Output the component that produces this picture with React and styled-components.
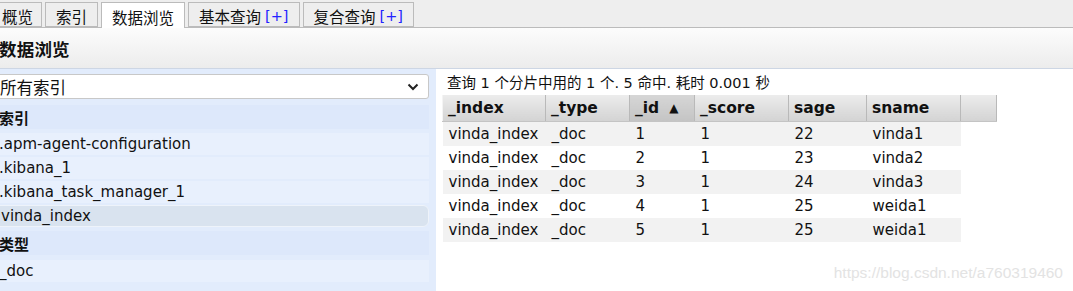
import React from 'react';
import styled, { createGlobalStyle } from 'styled-components';

const GlobalStyle = createGlobalStyle`
    html, body {
        margin: 0;
        padding: 0;
        background: #ffffff;
        overflow: hidden;
    }
    body {
        font-family: "DejaVu Sans", "Noto Sans CJK SC", sans-serif;
        color: #111;
    }
`

const tabs = [
    { label: '概览' },
    { label: '索引' },
    { label: '数据浏览', active: true },
    { label: '基本查询', plus: true },
    { label: '复合查询', plus: true },
];

const indices = ['.apm-agent-configuration', '.kibana_1', '.kibana_task_manager_1', 'vinda_index'];

const columns = [
    { key: '_index', width: 103 },
    { key: '_type', width: 84 },
    { key: '_id', width: 65, sorted: true },
    { key: '_score', width: 94 },
    { key: 'sage', width: 78 },
    { key: 'sname', width: 94 },
];

const rows = [
    ['vinda_index', '_doc', '1', '1', '22', 'vinda1'],
    ['vinda_index', '_doc', '2', '1', '23', 'vinda2'],
    ['vinda_index', '_doc', '3', '1', '24', 'vinda3'],
    ['vinda_index', '_doc', '4', '1', '25', 'weida1'],
    ['vinda_index', '_doc', '5', '1', '25', 'weida1'],
];

export default function App() {
    return (
        <>
            <GlobalStyle />
            <Page>
                <TabBar>
                    {tabs.map(t => (
                        <Tab key={t.label} active={t.active}>
                            {t.label}
                            {t.plus && <Plus>[+]</Plus>}
                        </Tab>
                    ))}
                </TabBar>
                <TitleBar>
                    <Title>数据浏览</Title>
                </TitleBar>
                <Body>
                    <Sidebar>
                        <SelectBox>
                            <SelectText>所有索引</SelectText>
                            <svg width="12" height="8" viewBox="0 0 12 8">
                                <polyline points="1.5,1.5 6,6 10.5,1.5" fill="none" stroke="#222" strokeWidth="2" />
                            </svg>
                        </SelectBox>
                        <SectionLabel>索引</SectionLabel>
                        <ItemList>
                            {indices.map(name => (
                                <Item key={name} selected={name === 'vinda_index'}>{name}</Item>
                            ))}
                        </ItemList>
                        <SectionLabel top={4}>类型</SectionLabel>
                        <ItemList top={5}>
                            <Item>_doc</Item>
                        </ItemList>
                    </Sidebar>
                    <Results>
                        <Info>查询 1 个分片中用的 1 个. 5 命中. 耗时 0.001 秒</Info>
                        <Table>
                            <thead>
                                <tr>
                                    {columns.map(c => (
                                        <HeadCell key={c.key} sorted={c.sorted} style={{ width: c.width }}>
                                            {c.key}{c.sorted && <Arrow>▲</Arrow>}
                                        </HeadCell>
                                    ))}
                                    <HeadCell style={{ width: 36 }} />
                                </tr>
                            </thead>
                            <tbody>
                                {rows.map((r, i) => (
                                    <Row key={i} odd={i % 2 === 0}>
                                        {r.map((v, j) => <Cell key={j}>{v}</Cell>)}
                                        <EmptyCell />
                                    </Row>
                                ))}
                            </tbody>
                        </Table>
                    </Results>
                </Body>
                <Watermark>https://blog.csdn.net/a760319460</Watermark>
            </Page>
        </>
    );
}

const Page = styled.div`
    position: relative;
    width: 1083px;
    height: 291px;
    margin-left: -10px;
    overflow: hidden;
`

const TabBar = styled.div`
    height: 27px;
    background: #eeeeee;
    border-bottom: 1px solid #bbbbbb;
    display: flex;
    align-items: flex-end;
    gap: 3px;
`

const Tab = styled.div`
    height: ${p => (p.active ? 26 : 25)}px;
    margin-bottom: ${p => (p.active ? -1 : 0)}px;
    box-sizing: border-box;
    padding: 2px 10px 0 10px;
    border: 1px solid #bbbbbb;
    border-bottom: ${p => (p.active ? 'none' : '1px solid #bbbbbb')};
    background: ${p => (p.active ? '#ffffff' : '#eeeeee')};
    display: flex;
    align-items: center;
    font-size: 15.5px;
    color: #111;
    white-space: nowrap;
    &:first-child {
        padding-left: 11px;
        padding-right: 8px;
    }
`

const Plus = styled.span`
    color: #2323ff;
    margin-left: 4px;
    font-size: 14.5px;
`

const TitleBar = styled.div`
    height: 41px;
    box-sizing: border-box;
    background: linear-gradient(#fcfcfc, #ececec);
    border-bottom: 1px solid #cdd6e4;
    display: flex;
    align-items: center;
    padding-left: 9px;
`

const Title = styled.div`
    font-size: 17.5px;
    font-weight: 700;
    letter-spacing: 0.2px;
`

const Body = styled.div`
    display: flex;
    align-items: flex-start;
`

const Sidebar = styled.div`
    width: 446px;
    height: 223px;
    box-sizing: border-box;
    background: #e2ecfc;
    padding: 5px 7px 0 0;
    flex-shrink: 0;
`

const SelectBox = styled.div`
    height: 25px;
    box-sizing: border-box;
    background: #ffffff;
    border: 1px solid #c8c8c8;
    border-radius: 3px;
    display: flex;
    align-items: center;
    justify-content: space-between;
    padding: 0 9px 0 9px;
`

const SelectText = styled.span`
    font-size: 16.5px;
`

const SectionLabel = styled.div`
    height: 24px;
    margin-top: ${p => p.top ?? 6}px;
    display: flex;
    align-items: center;
    padding-left: 9px;
    font-size: 15px;
    font-weight: 700;
    background: #dde8fb;
`

const ItemList = styled.div`
    margin-top: ${p => p.top ?? 4}px;
    display: flex;
    flex-direction: column;
    gap: 2px;
`

const Item = styled.div`
    height: 22px;
    box-sizing: border-box;
    display: flex;
    align-items: center;
    padding-left: ${p => (p.selected ? 10 : 9)}px;
    font-size: 15px;
    background: ${p => (p.selected ? '#d9e3ef' : '#e8f0fd')};
    border: ${p => (p.selected ? '1px solid #eef3fa' : 'none')};
    border-radius: ${p => (p.selected ? '6px' : '0')};
`

const Results = styled.div`
    margin-left: 6px;
    padding-top: 5px;
`

const Info = styled.div`
    height: 21px;
    font-size: 14.5px;
    line-height: 18px;
    padding-left: 5px;
    white-space: nowrap;
`

const Table = styled.table`
    border-collapse: collapse;
    table-layout: fixed;
    font-size: 15px;
`

const HeadCell = styled.th`
    height: 26px;
    box-sizing: border-box;
    padding: 0 0 0 5px;
    text-align: left;
    font-weight: 700;
    font-size: 15.5px;
    background: ${p => (p.sorted
        ? 'linear-gradient(#d6d6d6, #c4c4c4)'
        : 'linear-gradient(#ececec, #d3d3d3)')};
    border-left: 1px solid #f4f4f4;
    border-right: 1px solid #b9b9b9;
    border-bottom: 1px solid #c4c4c4;
    white-space: nowrap;
`

const Arrow = styled.span`
    font-size: 12px;
    margin-left: 10px;
    position: relative;
    top: -1px;
`

const Row = styled.tr`
    background: ${p => (p.odd ? '#f2f2f2' : '#ffffff')};
`

const Cell = styled.td`
    height: 24px;
    padding: 0 0 0 6px;
    white-space: nowrap;
`

const EmptyCell = styled.td`
    background: #ffffff;
`

const Watermark = styled.div`
    position: absolute;
    right: 10px;
    bottom: 9px;
    font-family: "Liberation Sans", Arial, sans-serif;
    font-size: 15.5px;
    color: #e3e3e3;
`
